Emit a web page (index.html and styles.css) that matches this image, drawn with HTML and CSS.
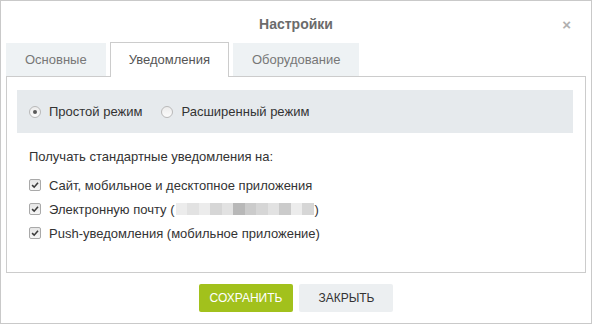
FILE: index.html
```html
<!DOCTYPE html>
<html lang="ru">
<head>
<meta charset="utf-8">
<title>Настройки</title>
<link rel="stylesheet" href="styles.css">
</head>
<body>
<div class="dialog">
  <div class="header">
    <span></span>
    <h1 class="title">Настройки</h1>
    <span class="close">×</span>
  </div>
  <div class="tabs">
    <div class="tab">Основные</div>
    <div class="tab active">Уведомления</div>
    <div class="tab">Оборудование</div>
  </div>
  <div class="panel">
    <div class="modes">
      <label class="opt"><span class="radio checked"></span>Простой режим</label>
      <label class="opt second"><span class="radio"></span>Расширенный режим</label>
    </div>
    <div class="section">
      <div class="caption">Получать стандартные уведомления на:</div>
      <ul class="checks">
        <li><span class="check"><svg viewBox="0 0 12 12" width="12" height="12"><path d="M2.5 6.2 L5 8.6 L9.6 3.2" fill="none" stroke="#3c3c3c" stroke-width="1.9"/></svg></span>Сайт, мобильное и десктопное приложения</li>
        <li><span class="check"><svg viewBox="0 0 12 12" width="12" height="12"><path d="M2.5 6.2 L5 8.6 L9.6 3.2" fill="none" stroke="#3c3c3c" stroke-width="1.9"/></svg></span>Электронную почту (<span class="blur"><i class="c1"></i><i class="c2"></i><i class="c1"></i><i class="c3"></i><i class="c2"></i><i class="c5"></i><i class="c4"></i><i class="c3"></i><i class="c2"></i><i class="c4"></i><i class="c1"></i><i class="c3"></i></span>)</li>
        <li><span class="check"><svg viewBox="0 0 12 12" width="12" height="12"><path d="M2.5 6.2 L5 8.6 L9.6 3.2" fill="none" stroke="#3c3c3c" stroke-width="1.9"/></svg></span>Push-уведомления (мобильное приложение)</li>
      </ul>
    </div>
  </div>
  <div class="footer">
    <button class="btn save">Сохранить</button>
    <button class="btn cancel">Закрыть</button>
  </div>
</div>
</body>
</html>
```
FILE: styles.css
```css
* { box-sizing: border-box; }
html, body { margin: 0; padding: 0; background: #fff; }
body {
  font-family: "Liberation Sans", Arial, sans-serif;
  font-size: 13px;
  color: #333;
}
.dialog {
  width: 592px;
  height: 324px;
  border: 1px solid #c9c9c9;
  display: flex;
  flex-direction: column;
}
.header {
  height: 41px;
  display: grid;
  grid-template-columns: 1fr auto 1fr;
  align-items: center;
}
.title {
  margin: 0;
  font-size: 14px;
  font-weight: bold;
  color: #6b6b6b;
  padding-top: 5px;
}
.close {
  justify-self: end;
  margin-right: 20px;
  font-size: 15px;
  font-weight: bold;
  color: #b0b0b0;
  padding-top: 5px;
}
.tabs {
  display: flex;
  align-items: flex-start;
  padding-left: 5px;
  gap: 4px;
}
.tab {
  height: 33px;
  margin-top: 1px;
  line-height: 33px;
  padding: 0 19px;
  background: #eef2f4;
  color: #777;
}
.tab.active {
  height: 35px;
  margin-top: 0;
  margin-bottom: -1px;
  line-height: 33px;
  padding: 0 18px;
  background: #fff;
  border: 1px solid #ccc;
  border-bottom: none;
  color: #555;
  position: relative;
  z-index: 1;
}
.panel {
  margin: 0 5px;
  height: 197px;
  border: 1px solid #ccc;
  padding: 13px 12px 0 10px;
}
.modes {
  height: 43px;
  background: #e6eaed;
  display: flex;
  align-items: center;
  padding: 0 12px;
}
.opt { display: flex; align-items: center; }
.opt.second { margin-left: 19px; }
.radio {
  width: 12px;
  height: 12px;
  border-radius: 50%;
  border: 1px solid #b9b9b9;
  background: linear-gradient(#ececec, #fbfbfb);
  margin-right: 8px;
  display: flex;
  align-items: center;
  justify-content: center;
}
.radio.checked::after {
  content: "";
  width: 4px;
  height: 4px;
  border-radius: 50%;
  background: #5a5a5a;
}
.section { padding: 0 12px; }
.caption {
  margin-top: 16px;
  line-height: 16px;
}
.checks {
  list-style: none;
  margin: 8px 0 0;
  padding: 0;
}
.checks li {
  height: 24px;
  display: flex;
  align-items: center;
}
.check {
  width: 12px;
  height: 12px;
  border: 1px solid #a9a9a9;
  border-radius: 2px;
  background: linear-gradient(#e6e6e6, #f6f6f6);
  margin-right: 8px;
  display: flex;
  align-items: center;
  justify-content: center;
}
.check svg { display: block; width: 10px; height: 10px; }
.blur {
  display: inline-flex;
  height: 12px;
  margin: 0 1px;
}
.blur i { width: 11.5px; height: 12px; display: block; }
.blur .c1 { background: #ececec; }
.blur .c2 { background: #e2e2e2; }
.blur .c3 { background: #d6d6d6; }
.blur .c4 { background: #cbcbcb; }
.blur .c5 { background: #b8b8b8; }
.footer {
  display: flex;
  justify-content: center;
  gap: 6px;
  padding-top: 11px;
}
.btn {
  height: 28px;
  border: none;
  border-radius: 2px;
  font-family: "Liberation Sans", Arial, sans-serif;
  font-size: 12px;
  text-transform: uppercase;
  cursor: pointer;
}
.btn.save {
  background: #a2c11c;
  color: #fff;
  padding: 0 11px;
}
.btn.cancel {
  background: #eceff1;
  color: #333;
  padding: 0 19px;
}
```
